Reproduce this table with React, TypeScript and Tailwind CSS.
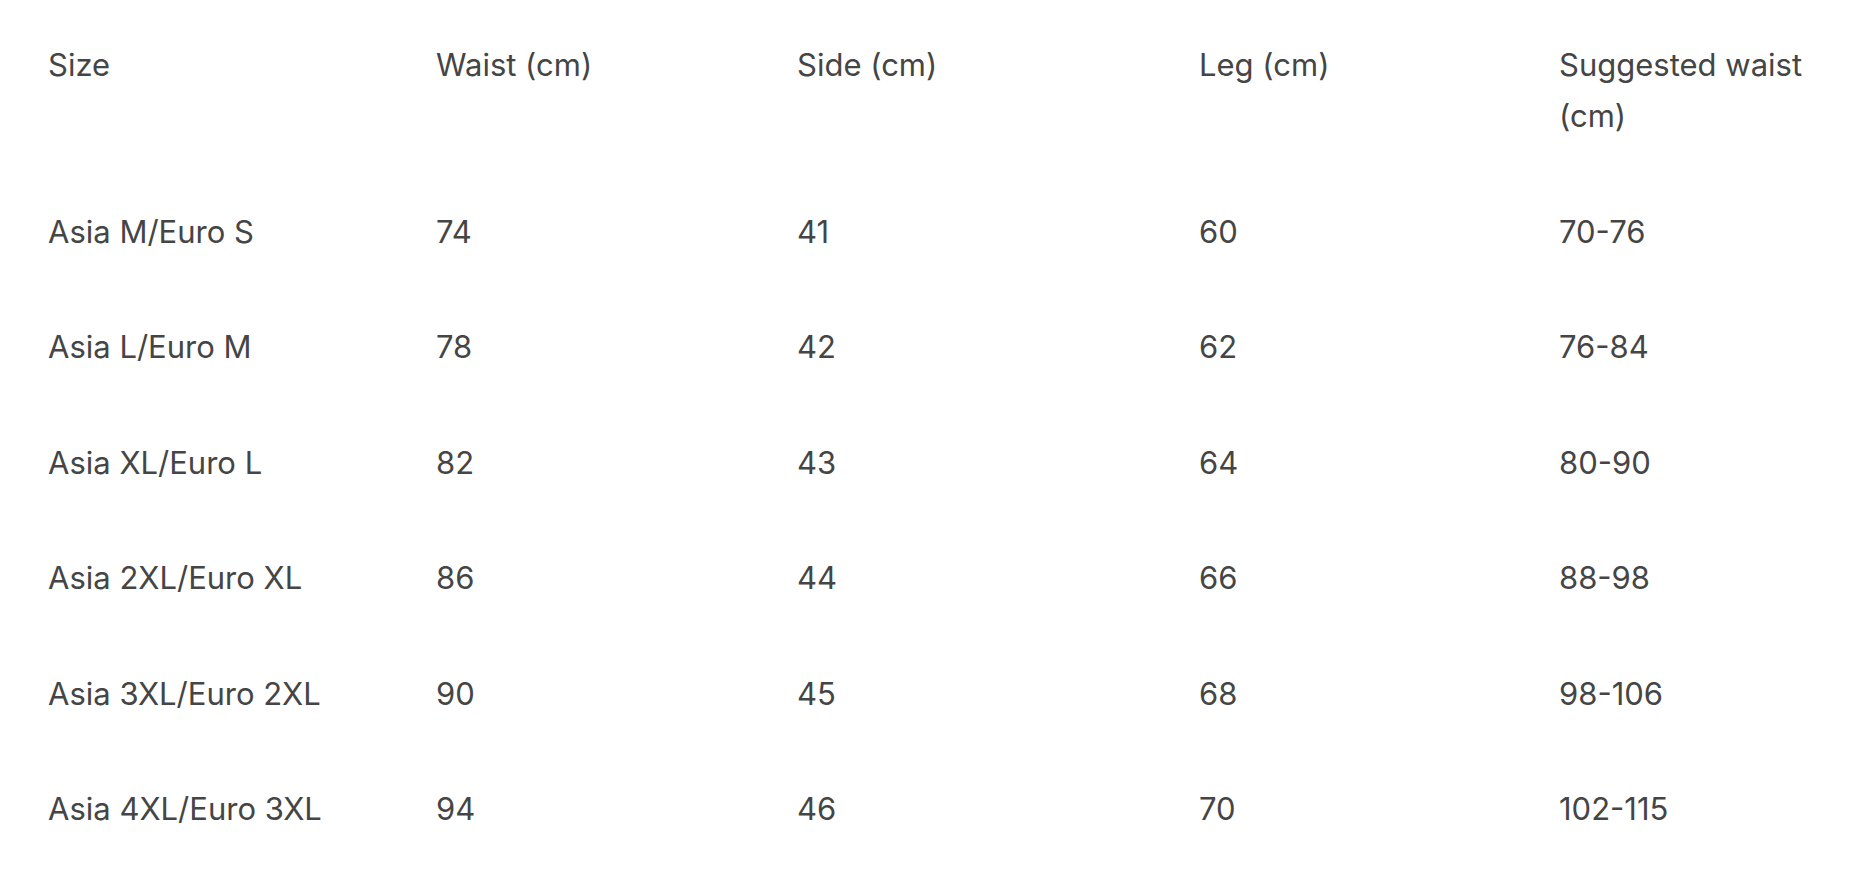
const headers = ["Size", "Waist (cm)", "Side (cm)", "Leg (cm)", "Suggested waist (cm)"];

const rows = [
  ["Asia M/Euro S", "74", "41", "60", "70-76"],
  ["Asia L/Euro M", "78", "42", "62", "76-84"],
  ["Asia XL/Euro L", "82", "43", "64", "80-90"],
  ["Asia 2XL/Euro XL", "86", "44", "66", "88-98"],
  ["Asia 3XL/Euro 2XL", "90", "45", "68", "98-106"],
  ["Asia 4XL/Euro 3XL", "94", "46", "70", "102-115"],
];

const App = () => {
  return (
    <div className="min-h-screen bg-white pt-[7px] pl-[48px] font-['Inter','Liberation_Sans',sans-serif] text-[31px] leading-[51px] text-[#454545]">
      <table className="table-fixed border-collapse text-left">
        <colgroup>
          <col className="w-[388px]" />
          <col className="w-[361px]" />
          <col className="w-[402px]" />
          <col className="w-[360px]" />
          <col className="w-[275px]" />
        </colgroup>
        <thead>
          <tr>
            {headers.map((h) => (
              <th key={h} className="py-[32.25px] align-top font-normal">
                {h}
              </th>
            ))}
          </tr>
        </thead>
        <tbody>
          {rows.map((row) => (
            <tr key={row[0]}>
              {row.map((cell, i) => (
                <td key={i} className="py-[32.25px] align-top">
                  {cell}
                </td>
              ))}
            </tr>
          ))}
        </tbody>
      </table>
    </div>
  );
};

export default App;
